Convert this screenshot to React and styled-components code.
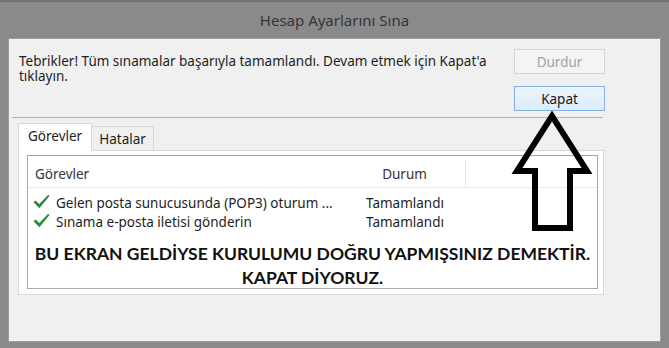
import React from 'react';
import styled, { createGlobalStyle } from 'styled-components';

const GlobalStyle = createGlobalStyle`
	html, body {
		margin: 0;
		padding: 0;
		background: #8a8a8a;
	}
	* {
		box-sizing: border-box;
	}
`;

const tasks = [
	{ name: 'Gelen posta sunucusunda (POP3) oturum ...', status: 'Tamamlandı' },
	{ name: 'Sınama e-posta iletisi gönderin', status: 'Tamamlandı' }
];

function CheckIcon() {
	return (
		<CheckSvg viewBox="0 0 17 15" width="17" height="15">
			<path d="M0.5 8.2 L2.6 6.4 L6.3 9.9 L15.2 0.8 L16.5 2 L6.4 14.2 Z" fill="#2f8a3c" />
		</CheckSvg>
	);
}

function Arrow() {
	return (
		<ArrowSvg viewBox="0 0 90 125" width="90" height="125">
			<path
				d="M45 6 L10 61 L28 61 L28 118 L63 118 L63 61 L80 61 Z"
				fill="none"
				stroke="#000"
				strokeWidth="6"
				strokeLinejoin="miter"
			/>
		</ArrowSvg>
	);
}

class App extends React.Component {
	constructor(props) {
		super(props);
		this.state = {
			activeTab: 'gorevler'
		};
	}

	render() {
		return (
			<Window>
				<GlobalStyle />
				<TitleBar>Hesap Ayarlarını Sına</TitleBar>
				<Content>
					<TopRow>
						<Message>
							Tebrikler! Tüm sınamalar başarıyla tamamlandı. Devam etmek için Kapat'a tıklayın.
						</Message>
						<ButtonColumn>
							<DialogButton disabled>Durdur</DialogButton>
							<DialogButton primary>Kapat</DialogButton>
						</ButtonColumn>
					</TopRow>
					<Separator />
					<TabStrip>
						<Tab active={this.state.activeTab === 'gorevler'} onClick={() => this.setState({ activeTab: 'gorevler' })}>
							Görevler
						</Tab>
						<Tab active={this.state.activeTab === 'hatalar'} onClick={() => this.setState({ activeTab: 'hatalar' })}>
							Hatalar
						</Tab>
					</TabStrip>
					<TabPanel>
						<ListBox>
							<ListHeader>
								<HeaderCell width="316px">Görevler</HeaderCell>
								<HeaderCell width="122px" center divider>
									Durum
								</HeaderCell>
							</ListHeader>
							<ListBody>
								{tasks.map((task) => (
									<ListRow key={task.name}>
										<NameCell>
											<CheckIcon />
											{task.name}
										</NameCell>
										<StatusCell>{task.status}</StatusCell>
									</ListRow>
								))}
							</ListBody>
							<Notice>
								<NoticeLine>BU EKRAN GELDİYSE KURULUMU DOĞRU YAPMIŞSINIZ DEMEKTİR.</NoticeLine>
								<NoticeLine>KAPAT DİYORUZ.</NoticeLine>
							</Notice>
						</ListBox>
					</TabPanel>
				</Content>
				<Arrow />
			</Window>
		);
	}
}

export default App;

const Window = styled.div`
	position: relative;
	width: 669px;
	height: 348px;
	display: flex;
	flex-direction: column;
	padding: 0 8px 6px 8px;
	background: #8a8a8a;
	border-top: 2px solid #727272;
	font-family: 'Noto Sans', 'Open Sans', sans-serif;
	font-size: 13.5px;
	color: #1e1e1e;
`;

const TitleBar = styled.div`
	height: 36px;
	display: flex;
	align-items: center;
	justify-content: center;
	padding-bottom: 1px;
	font-size: 15px;
	color: #363636;
`;

const Content = styled.div`
	flex: 1;
	display: flex;
	flex-direction: column;
	background: #f0f0f0;
	border: 1px solid #9c9c9c;
`;

const TopRow = styled.div`
	display: flex;
	justify-content: space-between;
	padding: 10px 55px 0 10px;
`;

const Message = styled.div`
	width: 470px;
	margin-top: 5px;
	line-height: 15px;
`;

const ButtonColumn = styled.div`
	display: flex;
	flex-direction: column;
	gap: 12px;
`;

const DialogButton = styled.button`
	width: 91px;
	height: 25px;
	padding: 0;
	font-family: inherit;
	font-size: 13.5px;
	border: 1px solid ${(props) => (props.primary ? '#7eb4ea' : '#d5d5d5')};
	background: ${(props) => (props.primary ? 'linear-gradient(#ecf4fc, #dcecfc)' : '#f4f4f4')};
	color: ${(props) => (props.disabled ? '#a3a3a3' : '#1a1a1a')};
`;

const Separator = styled.div`
	margin: 6px 57px 0 3px;
	height: 1px;
	background: #b4b4b4;
`;

const TabStrip = styled.div`
	display: flex;
	align-items: flex-end;
	margin: 5px 0 0 9px;
	height: 28px;
	position: relative;
	z-index: 1;
`;

const Tab = styled.div`
	height: ${(props) => (props.active ? '28px' : '25px')};
	padding: ${(props) => (props.active ? '0 9px' : '0 7px')};
	display: flex;
	align-items: center;
	padding-bottom: ${(props) => (props.active ? '3px' : '0')};
	background: ${(props) => (props.active ? '#ffffff' : '#f0f0f0')};
	border: 1px solid #d9d9d9;
	border-bottom: ${(props) => (props.active ? 'none' : '1px solid #d9d9d9')};
	border-left: ${(props) => (props.active ? '1px solid #d9d9d9' : 'none')};
	cursor: default;
`;

const TabPanel = styled.div`
	margin: -1px 56px 0 9px;
	height: 145px;
	padding: 4px 5px 5px 8px;
	background: #ffffff;
	border: 1px solid #d9d9d9;
`;

const ListBox = styled.div`
	height: 100%;
	display: flex;
	flex-direction: column;
	border: 1px solid #a8a8a8;
	background: #ffffff;
	overflow: hidden;
`;

const ListHeader = styled.div`
	display: flex;
	flex-shrink: 0;
	height: 32px;
	padding-top: 4px;
	border-bottom: 1px solid #eaeaea;
`;

const HeaderCell = styled.div`
	width: ${(props) => props.width};
	display: flex;
	align-items: center;
	justify-content: ${(props) => (props.center ? 'center' : 'flex-start')};
	padding-left: ${(props) => (props.center ? '0' : '7px')};
	border-right: ${(props) => (props.divider ? '1px solid #e5e5e5' : 'none')};
	color: #333;
`;

const ListBody = styled.div`
	padding-top: 5px;
	display: flex;
	flex-direction: column;
	flex-shrink: 0;
`;

const ListRow = styled.div`
	display: flex;
	height: 19px;
	align-items: center;
`;

const NameCell = styled.div`
	width: 316px;
	display: flex;
	align-items: center;
	gap: 6px;
	padding-left: 5px;
	white-space: nowrap;
	overflow: hidden;
`;

const StatusCell = styled.div`
	width: 122px;
	text-align: center;
`;

const CheckSvg = styled.svg`
	flex-shrink: 0;
	margin-top: -2px;
`;

const Notice = styled.div`
	margin-top: 11px;
	display: flex;
	flex-direction: column;
	align-items: center;
	flex-shrink: 0;
	font-family: Lato, 'Noto Sans', sans-serif;
	font-weight: 700;
	font-size: 17.5px;
	line-height: 24px;
	color: #111;
`;

const NoticeLine = styled.div`
	white-space: nowrap;
`;

const ArrowSvg = styled.svg`
	position: absolute;
	left: 507px;
	top: 108px;
	z-index: 2;
`;
